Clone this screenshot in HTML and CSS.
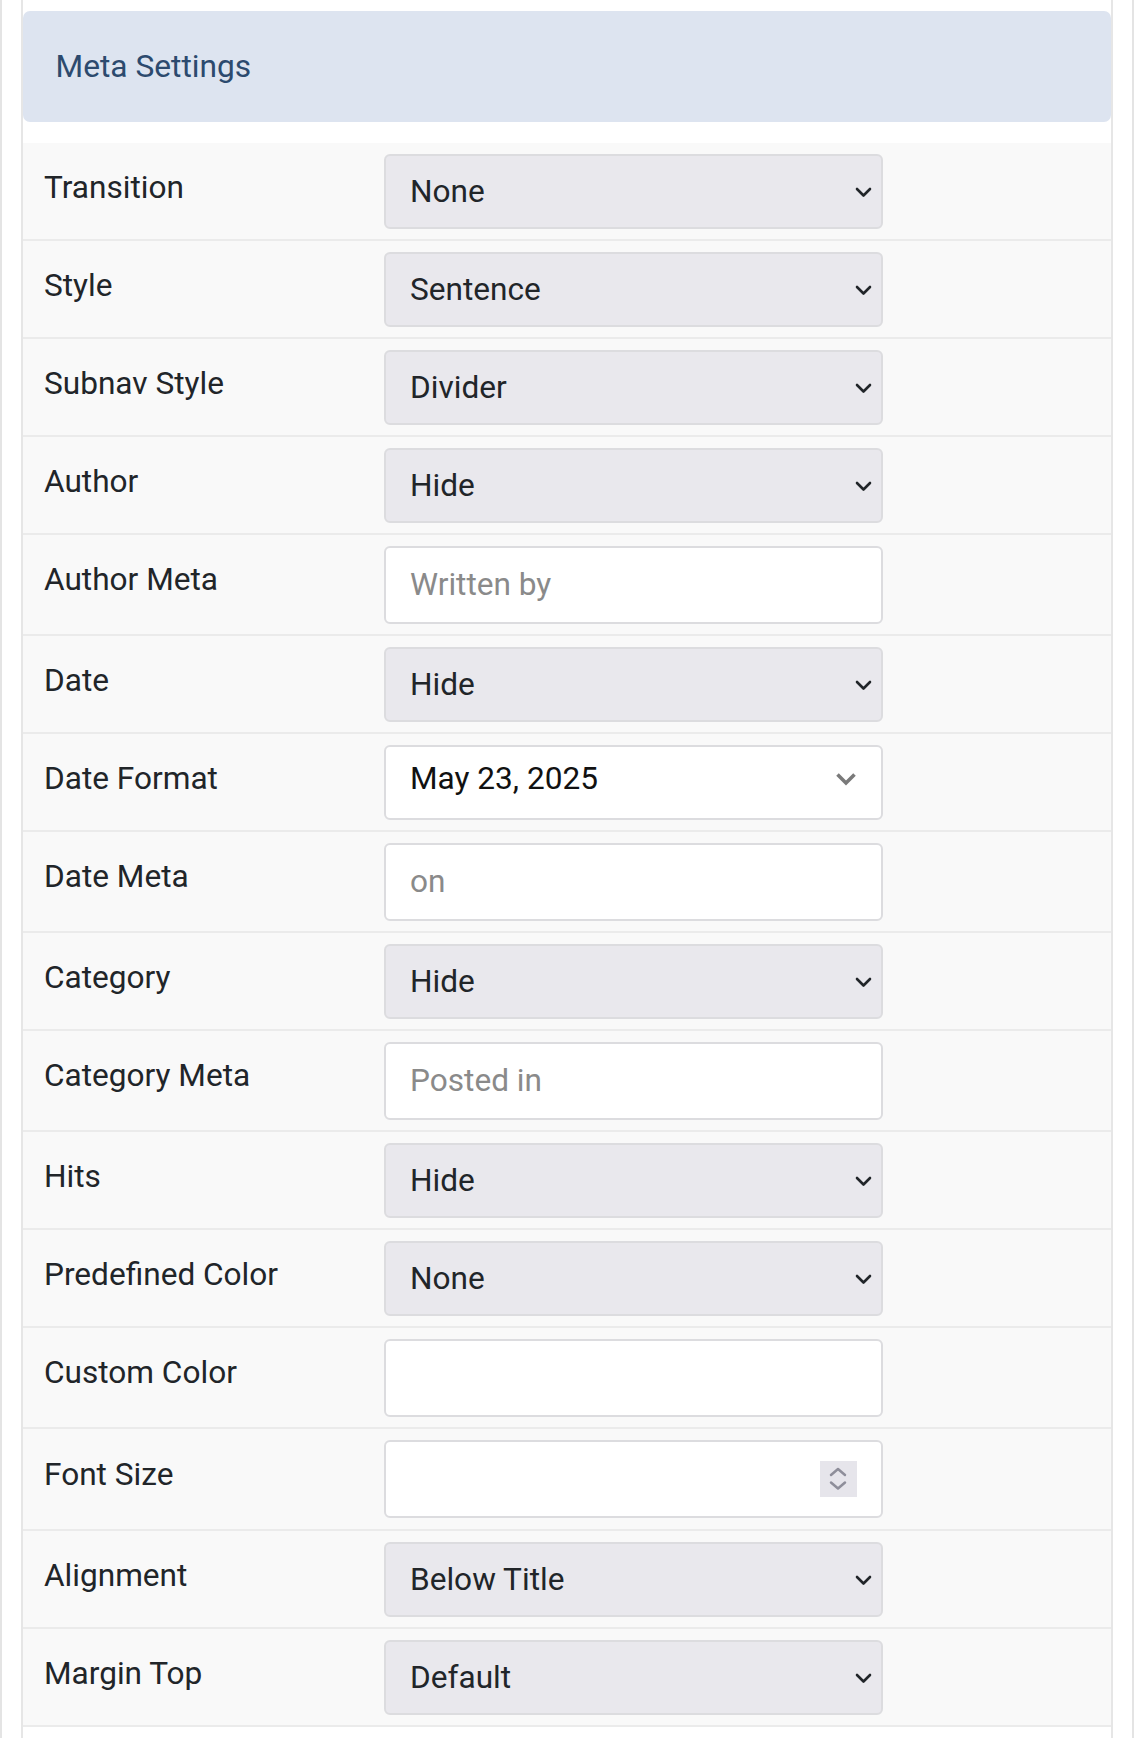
FILE: index.html
```html
<!DOCTYPE html>
<html lang="en">
<head>
<meta charset="utf-8">
<title>Meta Settings</title>
<link rel="stylesheet" href="styles.css">
</head>
<body>
<div class="frame">
  <div class="panel">
    <div class="panel-header">Meta Settings</div>
    <div class="rows">
      <div class="row">
        <label class="label">Transition</label>
        <div class="field">
          <select class="select"><option>None</option></select>
          <svg class="chev" width="17" height="11" viewBox="0 0 17 11"><polyline points="2,2 8.5,8.5 15,2"/></svg>
        </div>
      </div>
      <div class="row">
        <label class="label">Style</label>
        <div class="field">
          <select class="select"><option>Sentence</option></select>
          <svg class="chev" width="17" height="11" viewBox="0 0 17 11"><polyline points="2,2 8.5,8.5 15,2"/></svg>
        </div>
      </div>
      <div class="row">
        <label class="label">Subnav Style</label>
        <div class="field">
          <select class="select"><option>Divider</option></select>
          <svg class="chev" width="17" height="11" viewBox="0 0 17 11"><polyline points="2,2 8.5,8.5 15,2"/></svg>
        </div>
      </div>
      <div class="row">
        <label class="label">Author</label>
        <div class="field">
          <select class="select"><option>Hide</option></select>
          <svg class="chev" width="17" height="11" viewBox="0 0 17 11"><polyline points="2,2 8.5,8.5 15,2"/></svg>
        </div>
      </div>
      <div class="row">
        <label class="label">Author Meta</label>
        <div class="field">
          <input class="input" type="text" placeholder="Written by">
        </div>
      </div>
      <div class="row">
        <label class="label">Date</label>
        <div class="field">
          <select class="select"><option>Hide</option></select>
          <svg class="chev" width="17" height="11" viewBox="0 0 17 11"><polyline points="2,2 8.5,8.5 15,2"/></svg>
        </div>
      </div>
      <div class="row">
        <label class="label">Date Format</label>
        <div class="field">
          <select class="select select-plain"><option>May 23, 2025</option></select>
          <svg class="chev-plain" width="22" height="14" viewBox="0 0 22 14"><polyline points="2.5,2.5 11,11 19.5,2.5"/></svg>
        </div>
      </div>
      <div class="row">
        <label class="label">Date Meta</label>
        <div class="field">
          <input class="input" type="text" placeholder="on">
        </div>
      </div>
      <div class="row">
        <label class="label">Category</label>
        <div class="field">
          <select class="select"><option>Hide</option></select>
          <svg class="chev" width="17" height="11" viewBox="0 0 17 11"><polyline points="2,2 8.5,8.5 15,2"/></svg>
        </div>
      </div>
      <div class="row">
        <label class="label">Category Meta</label>
        <div class="field">
          <input class="input" type="text" placeholder="Posted in">
        </div>
      </div>
      <div class="row">
        <label class="label">Hits</label>
        <div class="field">
          <select class="select"><option>Hide</option></select>
          <svg class="chev" width="17" height="11" viewBox="0 0 17 11"><polyline points="2,2 8.5,8.5 15,2"/></svg>
        </div>
      </div>
      <div class="row">
        <label class="label">Predefined Color</label>
        <div class="field">
          <select class="select"><option>None</option></select>
          <svg class="chev" width="17" height="11" viewBox="0 0 17 11"><polyline points="2,2 8.5,8.5 15,2"/></svg>
        </div>
      </div>
      <div class="row">
        <label class="label">Custom Color</label>
        <div class="field">
          <input class="input" type="text">
        </div>
      </div>
      <div class="row row-number">
        <label class="label">Font Size</label>
        <div class="field">
          <input class="input input-number" type="text">
          <span class="spinner">
            <svg width="37" height="36" viewBox="0 0 37 36"><polyline points="11,14 18,8 25,14"/><polyline points="11,21.5 18,27.5 25,21.5"/></svg>
          </span>
        </div>
      </div>
      <div class="row">
        <label class="label">Alignment</label>
        <div class="field">
          <select class="select"><option>Below Title</option></select>
          <svg class="chev" width="17" height="11" viewBox="0 0 17 11"><polyline points="2,2 8.5,8.5 15,2"/></svg>
        </div>
      </div>
      <div class="row">
        <label class="label">Margin Top</label>
        <div class="field">
          <select class="select"><option>Default</option></select>
          <svg class="chev" width="17" height="11" viewBox="0 0 17 11"><polyline points="2,2 8.5,8.5 15,2"/></svg>
        </div>
      </div>
    </div>
  </div>
</div>
</body>
</html>
```

FILE: styles.css
```css
* {
  box-sizing: border-box;
}

html, body {
  margin: 0;
  padding: 0;
  background: #ffffff;
}

body {
  font-family: Roboto, "Liberation Sans", Arial, sans-serif;
  font-size: 31.5px;
  color: #212529;
}

.frame {
  width: 1134px;
  min-height: 1738px;
  border-left: 2px solid #e4e4e4;
  border-right: 2px solid #e4e4e4;
  padding: 0 19px;
}

.panel {
  min-height: 1738px;
  border-left: 2px solid #e6e6e6;
  border-right: 2px solid #e6e6e6;
  padding-top: 11px;
}

.panel-header {
  height: 111px;
  display: flex;
  align-items: center;
  padding-left: 32.5px;
  background: #dde4f0;
  border-radius: 7px;
  color: #2c4a6e;
  font-size: 31.7px;
  line-height: 1;
}

.rows {
  margin-top: 21px;
}

.row {
  display: flex;
  align-items: flex-start;
  background: #f9f9f9;
  border-bottom: 2px solid #ebebeb;
  padding: 10.5px 0;
}

.row-number {
  padding: 11px 0 11px;
}

.label {
  flex: 0 0 360.5px;
  padding-left: 21px;
  padding-top: 10.5px;
  line-height: 47px;
  font-size: 31.6px;
  color: #212529;
}

.field {
  position: relative;
  width: 499px;
}

.select {
  display: block;
  width: 100%;
  height: 75px;
  margin: 0;
  padding: 0 50px 0 24.5px;
  border: 2px solid #dcdcdf;
  border-radius: 6px;
  background: #e9e8ed;
  font-family: inherit;
  font-size: 31.6px;
  color: #212529;
  -webkit-appearance: none;
  appearance: none;
  outline: none;
}

.select-plain {
  background: #ffffff;
  color: #111111;
  padding-bottom: 8px;
}

.chev {
  position: absolute;
  right: 11px;
  top: 33px;
  pointer-events: none;
  fill: none;
  stroke: #212529;
  stroke-width: 2.6;
  stroke-linecap: round;
  stroke-linejoin: round;
}

.chev-plain {
  position: absolute;
  right: 25.5px;
  top: 27px;
  pointer-events: none;
  fill: none;
  stroke: #7a7a7a;
  stroke-width: 3.6;
  stroke-linecap: butt;
  stroke-linejoin: miter;
}

.input {
  display: block;
  width: 100%;
  height: 78px;
  margin: 0;
  padding: 0 24.5px;
  border: 2px solid #dcdcdf;
  border-radius: 6px;
  background: #ffffff;
  font-family: inherit;
  font-size: 31.6px;
  color: #212529;
  outline: none;
}

.input::placeholder {
  color: #8a8a8a;
  opacity: 1;
}

.spinner {
  position: absolute;
  right: 25.5px;
  top: 21px;
  width: 37px;
  height: 36px;
  background: #e6e5eb;
  pointer-events: none;
}

.spinner svg {
  display: block;
  fill: none;
  stroke: #8e8e9a;
  stroke-width: 2.5;
  stroke-linecap: round;
  stroke-linejoin: round;
}
```
